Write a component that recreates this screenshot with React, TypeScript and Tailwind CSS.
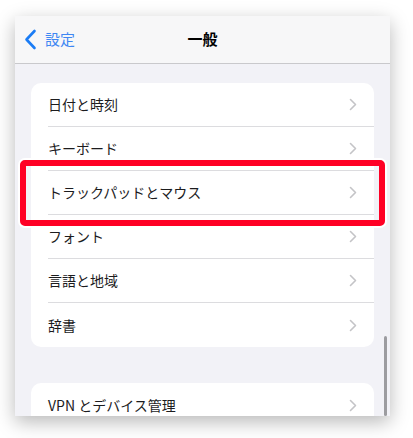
import React from "react";

const rows1 = ["日付と時刻", "キーボード", "トラックパッドとマウス", "フォント", "言語と地域", "辞書"];

function Chevron() {
  return (
    <svg width="8" height="13" viewBox="0 0 8 13" className="shrink-0">
      <path d="M1.5 1.5 L6.5 6.5 L1.5 11.5" fill="none" stroke="#c4c4c7" strokeWidth="1.6" strokeLinecap="round" strokeLinejoin="round" />
    </svg>
  );
}

function Row({ label, last }: { label: string; last?: boolean }) {
  return (
    <div className="flex h-[44px] items-stretch pl-[17px]">
      <div className={"flex flex-1 items-center justify-between pr-[17px] " + (last ? "" : "border-b border-[#dcdcdf]")}>
        <span className="text-[14px] text-[#1c1c1e]">{label}</span>
        <Chevron />
      </div>
    </div>
  );
}

export default function App() {
  return (
    <div className="relative h-[438px] w-[413px] bg-white pt-[16px] pl-[15px]" style={{ fontFamily: '"Noto Sans CJK JP", "Noto Sans", sans-serif' }}>
      <div className="relative h-[400px] w-[375px] overflow-hidden bg-[#f2f2f7] shadow-[0_6px_18px_rgba(0,0,0,0.28)]">
        <div className="relative flex h-[48px] items-center border-b border-[#c9c9cc] bg-[#f7f7f8]">
          <div className="flex items-center pl-[9px]">
            <svg width="13" height="21" viewBox="0 0 13 21">
              <path d="M10.5 2 L2.5 10.5 L10.5 19" fill="none" stroke="#1a7cf5" strokeWidth="2.6" strokeLinecap="round" strokeLinejoin="round" />
            </svg>
            <span className="ml-[8px] text-[15px] text-[#3f87f3]">設定</span>
          </div>
          <div className="absolute inset-x-0 top-0 flex h-full items-center justify-center pointer-events-none">
            <span className="text-[15px] font-bold text-black">一般</span>
          </div>
        </div>
        <div className="px-[16px] pt-[19px]">
          <div className="overflow-hidden rounded-[10px] bg-white">
            {rows1.map((r, i) => (
              <Row key={r} label={r} last={i === rows1.length - 1} />
            ))}
          </div>
          <div className="mt-[36px] overflow-hidden rounded-[10px] bg-white">
            <Row label="VPN とデバイス管理" last />
          </div>
        </div>
        <div className="absolute right-[3px] top-[320px] h-[80px] w-[3px] rounded-full bg-[#9c9ca0]" />
      </div>
      <div className="absolute left-[18px] top-[158px] h-[70px] w-[369px] rounded-[7px] border-[2px] border-white">
        <div className="h-full w-full rounded-[5px] border-[6px] border-[#ff0025]" />
      </div>
    </div>
  );
}
